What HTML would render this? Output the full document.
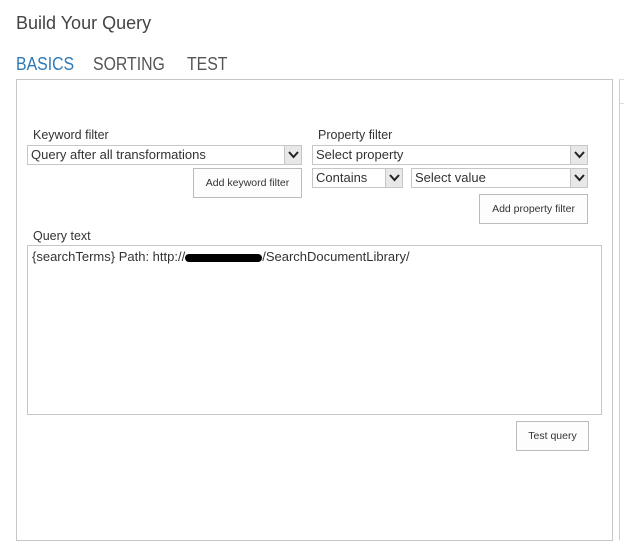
<!DOCTYPE html>
<html><head><style>
body{margin:0;width:624px;height:527px;background:#fff;font-family:"Liberation Sans",sans-serif;color:#444;position:relative;overflow:hidden}
.a{position:absolute;white-space:nowrap}
.tab{transform-origin:0 0;transform:scaleX(0.88)}
.sel{position:absolute;border:1px solid #c6c6c6;background:#fff;box-sizing:border-box;font-size:13px;color:#333;padding:1px 0 0 3px}
.arr{position:absolute;right:0;top:0;width:17px;height:100%;background:#e8e8e8;border-left:1px solid #c6c6c6;box-sizing:border-box}
.arr svg{position:absolute;left:3px;top:4px}
.btn{position:absolute;border:1px solid #bbb;background:#fdfdfd;box-sizing:border-box;font-size:10.5px;color:#333;text-align:center}
</style></head><body>
<div class="a" style="left:16px;top:13px;font-size:18px;color:#444">Build Your Query</div>
<div class="a tab" style="left:16px;top:54px;font-size:18px;color:#2d7ab8">BASICS</div>
<div class="a tab" style="left:93px;top:54px;font-size:18px;color:#555">SORTING</div>
<div class="a tab" style="left:187px;top:54px;font-size:18px;color:#555">TEST</div>
<div class="a" style="left:16px;top:79px;width:595px;height:460px;border:1px solid #c6c6c6"></div>
<div class="a" style="left:619px;top:79px;width:10px;height:460px;border-left:1px solid #ccc;border-top:1px solid #ddd"></div>
<div class="a" style="left:620px;top:103px;width:10px;border-top:1px solid #ddd"></div>

<div class="a" style="left:33px;top:128px;font-size:12.5px;color:#333">Keyword filter</div>
<div class="sel" style="left:27px;top:145px;width:275px;height:20px">Query after all transformations<div class="arr"><svg width="11" height="9"><path d="M1 2L5.5 7L10 2" stroke="#222" stroke-width="2" fill="none"/></svg></div></div>
<div class="btn" style="left:193px;top:168px;width:109px;height:30px;line-height:28px">Add keyword filter</div>

<div class="a" style="left:318px;top:128px;font-size:12.5px;color:#333">Property filter</div>
<div class="sel" style="left:312px;top:145px;width:276px;height:20px">Select property<div class="arr"><svg width="11" height="9"><path d="M1 2L5.5 7L10 2" stroke="#222" stroke-width="2" fill="none"/></svg></div></div>
<div class="sel" style="left:312px;top:168px;width:91px;height:20px">Contains<div class="arr"><svg width="11" height="9"><path d="M1 2L5.5 7L10 2" stroke="#222" stroke-width="2" fill="none"/></svg></div></div>
<div class="sel" style="left:411px;top:168px;width:177px;height:20px">Select value<div class="arr"><svg width="11" height="9"><path d="M1 2L5.5 7L10 2" stroke="#222" stroke-width="2" fill="none"/></svg></div></div>
<div class="btn" style="left:479px;top:194px;width:109px;height:30px;line-height:28px">Add property filter</div>

<div class="a" style="left:33px;top:229px;font-size:12.5px;color:#333">Query text</div>
<div class="a" style="left:27px;top:245px;width:573px;height:168px;border:1px solid #c6c6c6"></div>
<div class="a" style="left:32px;top:249px;font-size:13px;color:#333">{searchTerms} Path: http://<span style="display:inline-block;width:77px;height:8px;background:#000;border-radius:4px;vertical-align:middle"></span>/SearchDocumentLibrary/</div>
<div class="btn" style="left:516px;top:421px;width:73px;height:30px;line-height:28px">Test query</div>
</body></html>
